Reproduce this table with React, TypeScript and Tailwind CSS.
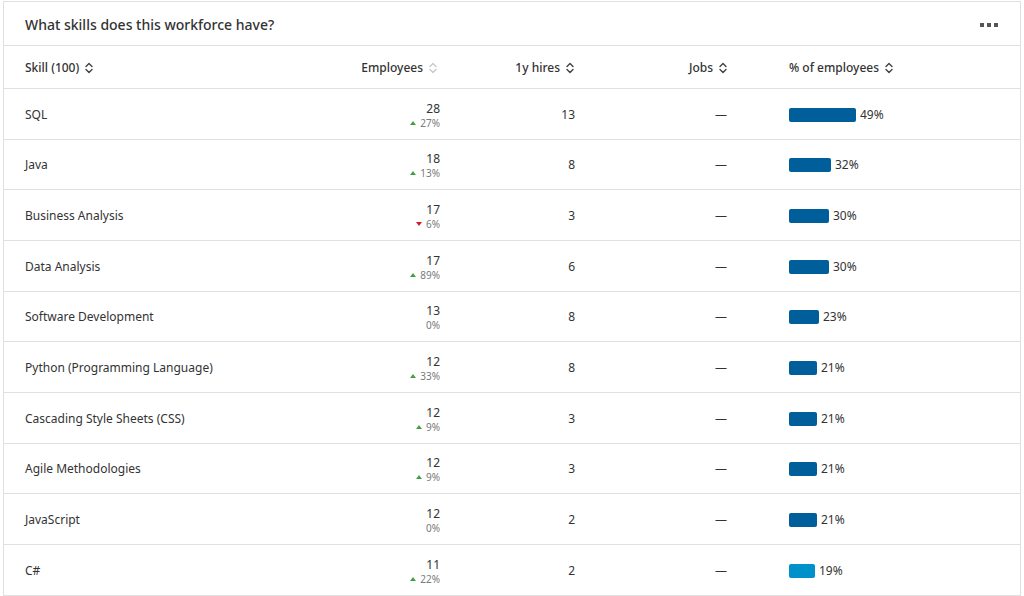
import React from 'react';

type Skill = {
    name: string;
    employees: number;
    change: number | null;
    hires: number;
    share: number;
    bar: number;
    light?: boolean;
};

const skills: Skill[] = [
    { name: 'SQL', employees: 28, change: 27, hires: 13, share: 49, bar: 67 },
    { name: 'Java', employees: 18, change: 13, hires: 8, share: 32, bar: 42 },
    { name: 'Business Analysis', employees: 17, change: -6, hires: 3, share: 30, bar: 40 },
    { name: 'Data Analysis', employees: 17, change: 89, hires: 6, share: 30, bar: 40 },
    { name: 'Software Development', employees: 13, change: 0, hires: 8, share: 23, bar: 30 },
    { name: 'Python (Programming Language)', employees: 12, change: 33, hires: 8, share: 21, bar: 28 },
    { name: 'Cascading Style Sheets (CSS)', employees: 12, change: 9, hires: 3, share: 21, bar: 28 },
    { name: 'Agile Methodologies', employees: 12, change: 9, hires: 3, share: 21, bar: 28 },
    { name: 'JavaScript', employees: 12, change: 0, hires: 2, share: 21, bar: 28 },
    { name: 'C#', employees: 11, change: 22, hires: 2, share: 19, bar: 26, light: true },
];

const SortIcon = ({ faded }: { faded?: boolean }) => (
    <svg
        width="12"
        height="16"
        viewBox="0 0 12 16"
        fill="none"
        stroke={faded ? '#c9c9c9' : '#404040'}
        strokeWidth="1.4"
        strokeLinecap="round"
        strokeLinejoin="round"
    >
        <path d="M3 6.5 L6 3.5 L9 6.5" />
        <path d="M3 9.5 L6 12.5 L9 9.5" />
    </svg>
);

const Change = ({ value }: { value: number | null }) => {
    if (value === null) return null;
    return (
        <div className="flex items-center justify-end gap-[4px] text-[10px] leading-[12px] text-[#7a7a7a]">
            {value > 0 && (
                <span className="inline-block w-0 h-0 border-l-[3px] border-r-[3px] border-b-[4px] border-l-transparent border-r-transparent border-b-[#43a047]" />
            )}
            {value < 0 && (
                <span className="inline-block w-0 h-0 border-l-[3px] border-r-[3px] border-t-[4px] border-l-transparent border-r-transparent border-t-[#d81b2b]" />
            )}
            <span>{Math.abs(value)}%</span>
        </div>
    );
};

const cols = 'grid grid-cols-[336px_100px_136px_153px_1fr]';

export default function App() {
    return (
        <div
            className="w-[1024px] h-[596px] bg-white pt-[1px] pl-[3px] overflow-hidden text-[#333]"
            style={{ fontFamily: '"Noto Sans", "Open Sans", sans-serif' }}
        >
            <div className="w-[1018px] h-[600px] border border-[#e0e0e0]">
                <div className="h-[44px] flex items-center justify-between pt-[2px] pl-[21px] pr-[22px] border-b border-[#e0e0e0]">
                    <h2 className="text-[14px] font-medium text-[#333]">What skills does this workforce have?</h2>
                    <div className="flex gap-[3px]">
                        <span className="w-[4px] h-[4px] bg-[#555]" />
                        <span className="w-[4px] h-[4px] bg-[#555]" />
                        <span className="w-[4px] h-[4px] bg-[#555]" />
                    </div>
                </div>

                <div className={`${cols} h-[43px] pt-[2px] items-center border-b border-[#e0e0e0] text-[12px] font-medium text-[#333]`}>
                    <div className="pl-[21px] flex items-center gap-[4px]">
                        Skill (100) <SortIcon />
                    </div>
                    <div className="flex items-center justify-end gap-[4px] pr-[1px]">
                        Employees <SortIcon faded />
                    </div>
                    <div className="flex items-center justify-end gap-[4px]">
                        1y hires <SortIcon />
                    </div>
                    <div className="flex items-center justify-end gap-[4px]">
                        Jobs <SortIcon />
                    </div>
                    <div className="pl-[60px] flex items-center gap-[4px]">
                        % of employees <SortIcon />
                    </div>
                </div>

                {skills.map((s) => (
                    <div
                        key={s.name}
                        className={`${cols} h-[50.67px] pt-[2px] items-center border-b border-[#e0e0e0] text-[12px] text-[#333]`}
                    >
                        <div className="pl-[21px]">{s.name}</div>
                        <div className="text-right">
                            <div className="leading-[16px]">{s.employees}</div>
                            <Change value={s.change} />
                        </div>
                        <div className="text-right pr-[1px]">{s.hires}</div>
                        <div className="text-right pr-[2px]">—</div>
                        <div className="pl-[60px] flex items-center gap-[4px]">
                            <span
                                className={`h-[14px] rounded-[2px] ${s.light ? 'bg-[#0091ca]' : 'bg-[#005f9b]'}`}
                                style={{ width: s.bar }}
                            />
                            <span>{s.share}%</span>
                        </div>
                    </div>
                ))}
            </div>
        </div>
    );
}
